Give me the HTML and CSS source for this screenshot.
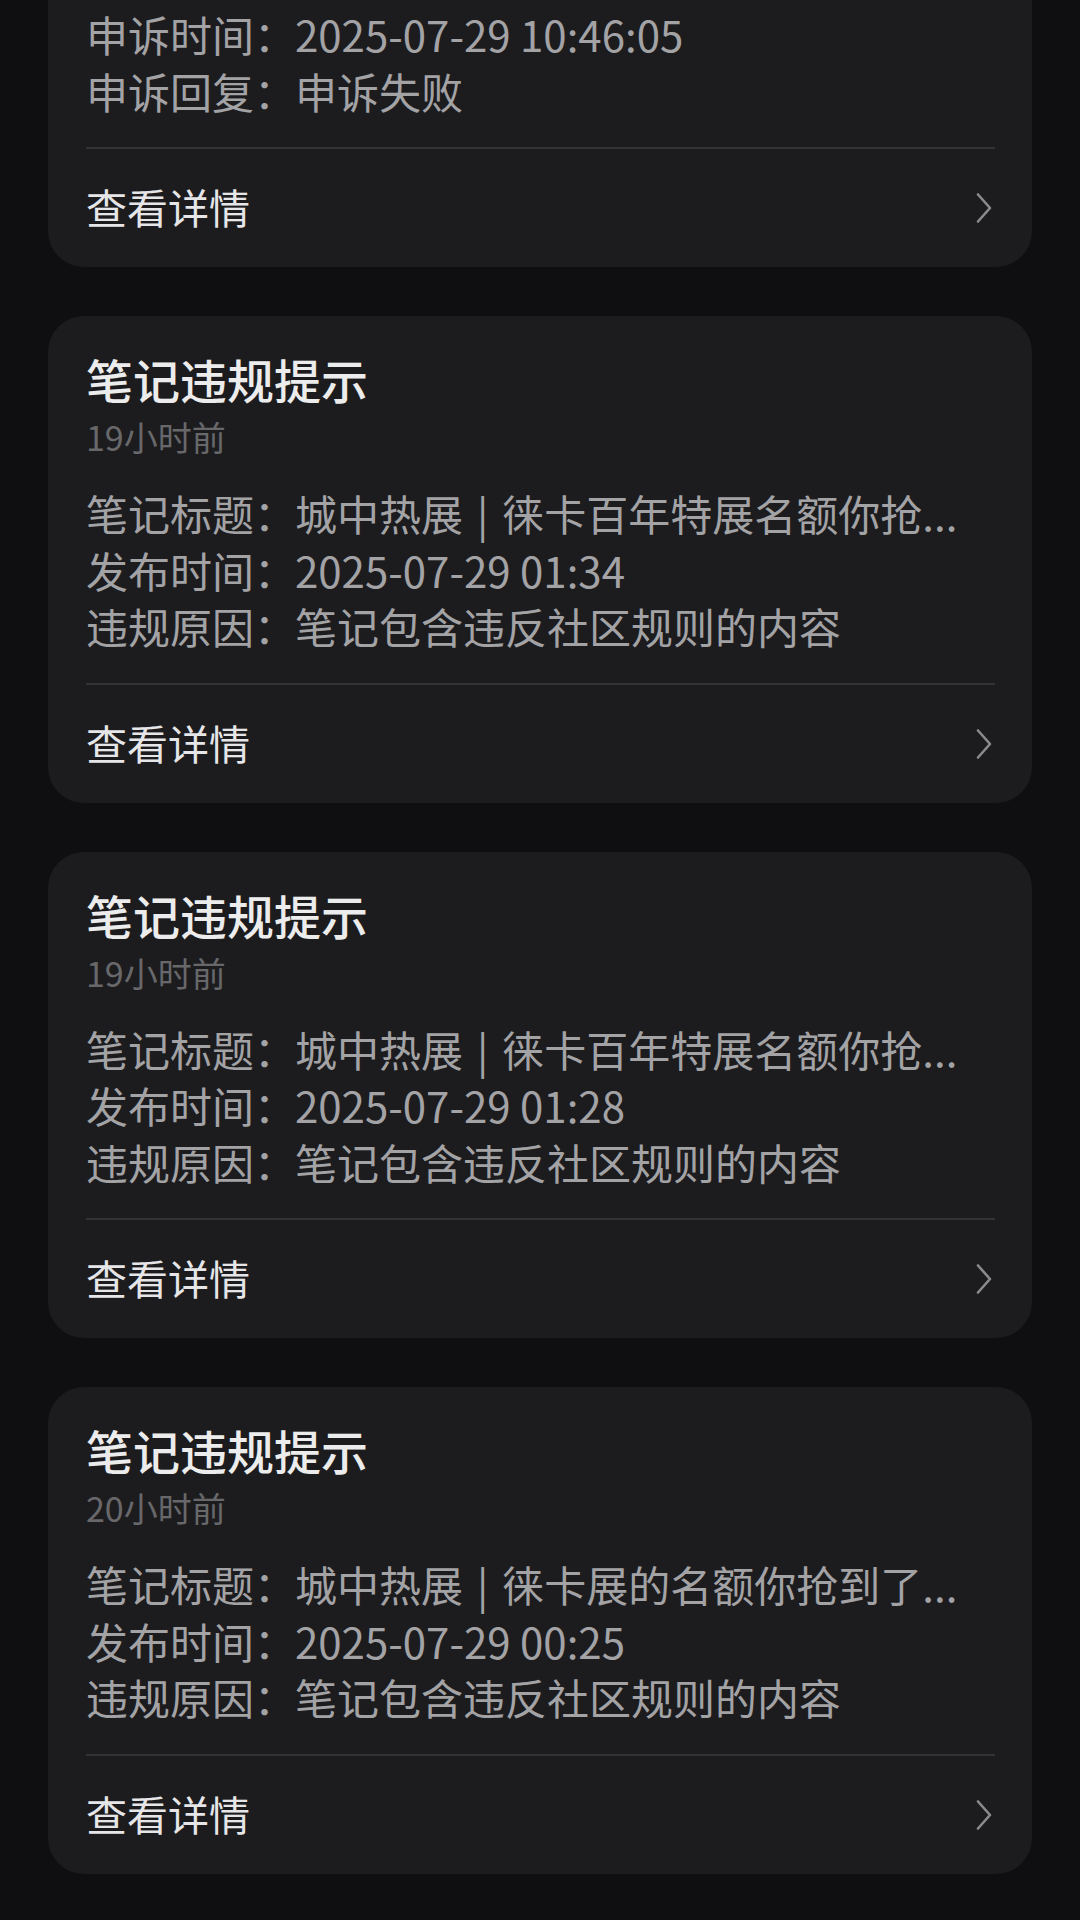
FILE: index.html
```html
<!DOCTYPE html>
<html lang="zh-CN">
<head>
<meta charset="utf-8">
<link rel="stylesheet" href="styles.css">
</head>
<body>
<div class="list">
  <section class="card card--clipped">
    <div class="rows">
      <div class="row"><span class="label">申诉时间：</span><span class="value">2025-07-29 10:46:05</span></div>
      <div class="row"><span class="label">申诉回复：</span><span class="value">申诉失败</span></div>
    </div>
    <div class="footer"><span class="more">查看详情</span><svg class="chev" viewBox="0 0 16 30"><path d="M2 1.5 L14 15 L2 28.5" /></svg></div>
  </section>

  <section class="card">
    <h2 class="title">笔记违规提示</h2>
    <div class="time">19小时前</div>
    <div class="rows">
      <div class="row"><span class="label">笔记标题：</span><span class="value">城中热展<span class="bar">|</span>徕卡百年特展名额你抢...</span></div>
      <div class="row"><span class="label">发布时间：</span><span class="value">2025-07-29 01:34</span></div>
      <div class="row"><span class="label">违规原因：</span><span class="value">笔记包含违反社区规则的内容</span></div>
    </div>
    <div class="footer"><span class="more">查看详情</span><svg class="chev" viewBox="0 0 16 30"><path d="M2 1.5 L14 15 L2 28.5" /></svg></div>
  </section>

  <section class="card">
    <h2 class="title">笔记违规提示</h2>
    <div class="time">19小时前</div>
    <div class="rows">
      <div class="row"><span class="label">笔记标题：</span><span class="value">城中热展<span class="bar">|</span>徕卡百年特展名额你抢...</span></div>
      <div class="row"><span class="label">发布时间：</span><span class="value">2025-07-29 01:28</span></div>
      <div class="row"><span class="label">违规原因：</span><span class="value">笔记包含违反社区规则的内容</span></div>
    </div>
    <div class="footer"><span class="more">查看详情</span><svg class="chev" viewBox="0 0 16 30"><path d="M2 1.5 L14 15 L2 28.5" /></svg></div>
  </section>

  <section class="card">
    <h2 class="title">笔记违规提示</h2>
    <div class="time">20小时前</div>
    <div class="rows">
      <div class="row"><span class="label">笔记标题：</span><span class="value">城中热展<span class="bar">|</span>徕卡展的名额你抢到了...</span></div>
      <div class="row"><span class="label">发布时间：</span><span class="value">2025-07-29 00:25</span></div>
      <div class="row"><span class="label">违规原因：</span><span class="value">笔记包含违反社区规则的内容</span></div>
    </div>
    <div class="footer"><span class="more">查看详情</span><svg class="chev" viewBox="0 0 16 30"><path d="M2 1.5 L14 15 L2 28.5" /></svg></div>
  </section>
</div>
</body>
</html>
```

FILE: styles.css
```css
html, body {
  margin: 0;
  padding: 0;
  background: #0f0f11;
}
body {
  width: 1080px;
  height: 1920px;
  overflow: hidden;
  font-family: "Noto Sans CJK SC", "Noto Sans", sans-serif;
}
.list {
  display: flex;
  flex-direction: column;
  gap: 49px;
  padding: 0 48px;
}
.card {
  background: #1c1c1f;
  border-radius: 36px;
  padding: 34px 37px 0 38px;
}
.card--clipped {
  border-radius: 0 0 36px 36px;
  padding-top: 6px;
}
.title {
  margin: 0;
  font-size: 47px;
  font-weight: 500;
  line-height: 58px;
  color: #ececec;
}
.time {
  margin-top: 5px;
  font-size: 34px;
  line-height: 48px;
  color: #68686b;
}
.rows {
  margin-top: 24px;
  padding-bottom: 28px;
  border-bottom: 2px solid #333336;
}
.card--clipped .rows {
  margin-top: 0;
}
.row {
  font-size: 42px;
  line-height: 56.5px;
  color: #a3a3a6;
  white-space: nowrap;
  display: flex;
}
.label {
  width: 209px;
  flex: none;
}
.bar {
  margin: 0 14px;
}
.footer {
  height: 118px;
  display: flex;
  align-items: center;
  justify-content: space-between;
}
.more {
  font-size: 41px;
  color: #e6e6e8;
  margin-top: -4px;
}
.chev {
  width: 16px;
  height: 30px;
  margin-right: 3px;
}
.chev path {
  fill: none;
  stroke: #8b8b8e;
  stroke-width: 2.6;
  stroke-linecap: round;
  stroke-linejoin: round;
}
```
